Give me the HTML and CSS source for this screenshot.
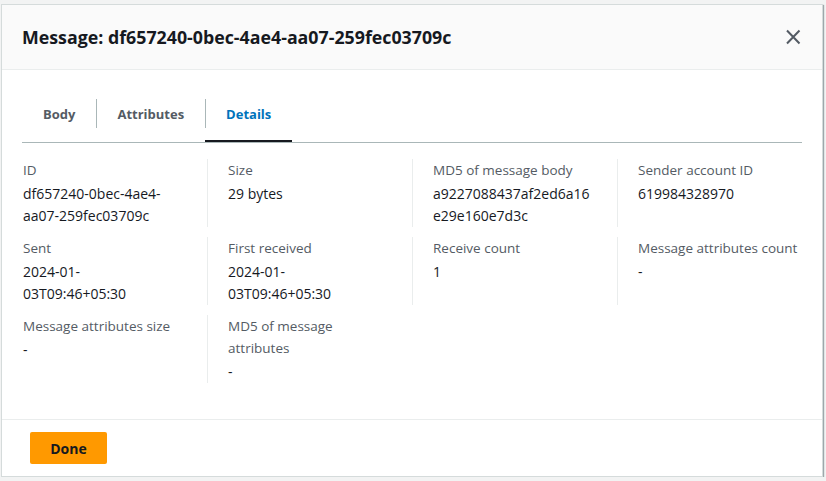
FILE: index.html
```html
<!DOCTYPE html>
<html lang="en">
<head>
<meta charset="utf-8">
<title>Message details</title>
<link rel="stylesheet" href="styles.css">
</head>
<body>
<div class="modal">
  <div class="modal-header">
    <h2 class="modal-title">Message: df657240-0bec-4ae4-aa07-259fec03709c</h2>
    <button class="close-btn" aria-label="Close">
      <svg width="16" height="16" viewBox="0 0 16 16"><path d="M2 1.5l12.5 13M14.5 1.5L2 14.5" stroke="#545b64" stroke-width="2" fill="none"/></svg>
    </button>
  </div>
  <div class="modal-body">
    <div class="tabs">
      <div class="tab">Body</div>
      <div class="tab">Attributes</div>
      <div class="tab active">Details</div>
    </div>
    <div class="details">
      <div class="cell"><div class="label">ID</div><div class="value">df657240-0bec-4ae4-aa07-259fec03709c</div></div>
      <div class="cell"><div class="label">Size</div><div class="value">29 bytes</div></div>
      <div class="cell"><div class="label">MD5 of message body</div><div class="value">a9227088437af2ed6a16e29e160e7d3c</div></div>
      <div class="cell"><div class="label">Sender account ID</div><div class="value">619984328970</div></div>
      <div class="cell"><div class="label">Sent</div><div class="value">2024-01-03T09:46+05:30</div></div>
      <div class="cell"><div class="label">First received</div><div class="value">2024-01-03T09:46+05:30</div></div>
      <div class="cell"><div class="label">Receive count</div><div class="value">1</div></div>
      <div class="cell"><div class="label">Message attributes count</div><div class="value">-</div></div>
      <div class="cell"><div class="label">Message attributes size</div><div class="value">-</div></div>
      <div class="cell"><div class="label">MD5 of message attributes</div><div class="value">-</div></div>
    </div>
  </div>
  <div class="modal-footer">
    <button class="done-btn">Done</button>
  </div>
</div>
</body>
</html>
```

FILE: styles.css
```css
* { box-sizing: border-box; }
html, body { margin: 0; padding: 0; }
body {
  background: #f2f3f3;
  font-family: "Open Sans", "Liberation Sans", sans-serif;
  font-size: 14px;
  line-height: 22px;
  color: #16191f;
  padding: 4px 0 0 1px;
}
.modal {
  width: 822px;
  background: #fff;
  border: 1px solid #d5dbdb;
  box-shadow: 1px 1px 1px 0 rgba(0, 28, 36, 0.35);
}
.modal-header {
  height: 65px;
  background: #fafafa;
  border-bottom: 1px solid #eaeded;
  display: flex;
  align-items: center;
  justify-content: space-between;
  padding: 0 20px;
}
.modal-title {
  margin: 0;
  font-size: 17.8px;
  line-height: 26px;
  font-weight: 700;
  color: #16191f;
}
.close-btn {
  border: 0;
  background: none;
  padding: 0;
  width: 16px;
  height: 16px;
  margin-right: 1px;
  display: flex;
}
.modal-body {
  padding: 29px 20px 36px;
}
.tabs {
  display: flex;
  border-bottom: 1px solid #aab7b8;
  margin-bottom: 16px;
}
.tab {
  position: relative;
  padding: 4px 21px 15px;
  font-size: 13px;
  font-weight: 700;
  color: #545b64;
  border-bottom: 2px solid transparent;
}
.tab + .tab::before {
  content: "";
  position: absolute;
  left: 0;
  top: 0;
  width: 1px;
  height: 29px;
  background: #aab7b8;
}
.tab.active {
  color: #0073bb;
  border-bottom-color: #16191f;
}
.details {
  display: grid;
  grid-template-columns: repeat(4, 1fr);
  row-gap: 10px;
  margin: 0 -20px;
}
.cell {
  border-left: 1px solid #eaeded;
  padding: 0 20px;
  overflow-wrap: anywhere;
}
.cell:nth-child(4n+1) { border-left-color: transparent; }
.label {
  color: #545b64;
  font-size: 13.5px;
  margin-bottom: 2px;
}
.value {
  color: #16191f;
  margin-right: 5.5px;
}
.modal-footer {
  border-top: 1px solid #eaeded;
  padding: 12px 28px;
}
.done-btn {
  width: 77px;
  height: 32px;
  background: #ff9900;
  border: 0;
  border-radius: 2px;
  font-family: inherit;
  font-size: 14px;
  font-weight: 700;
  color: #16191f;
  display: block;
}
```
